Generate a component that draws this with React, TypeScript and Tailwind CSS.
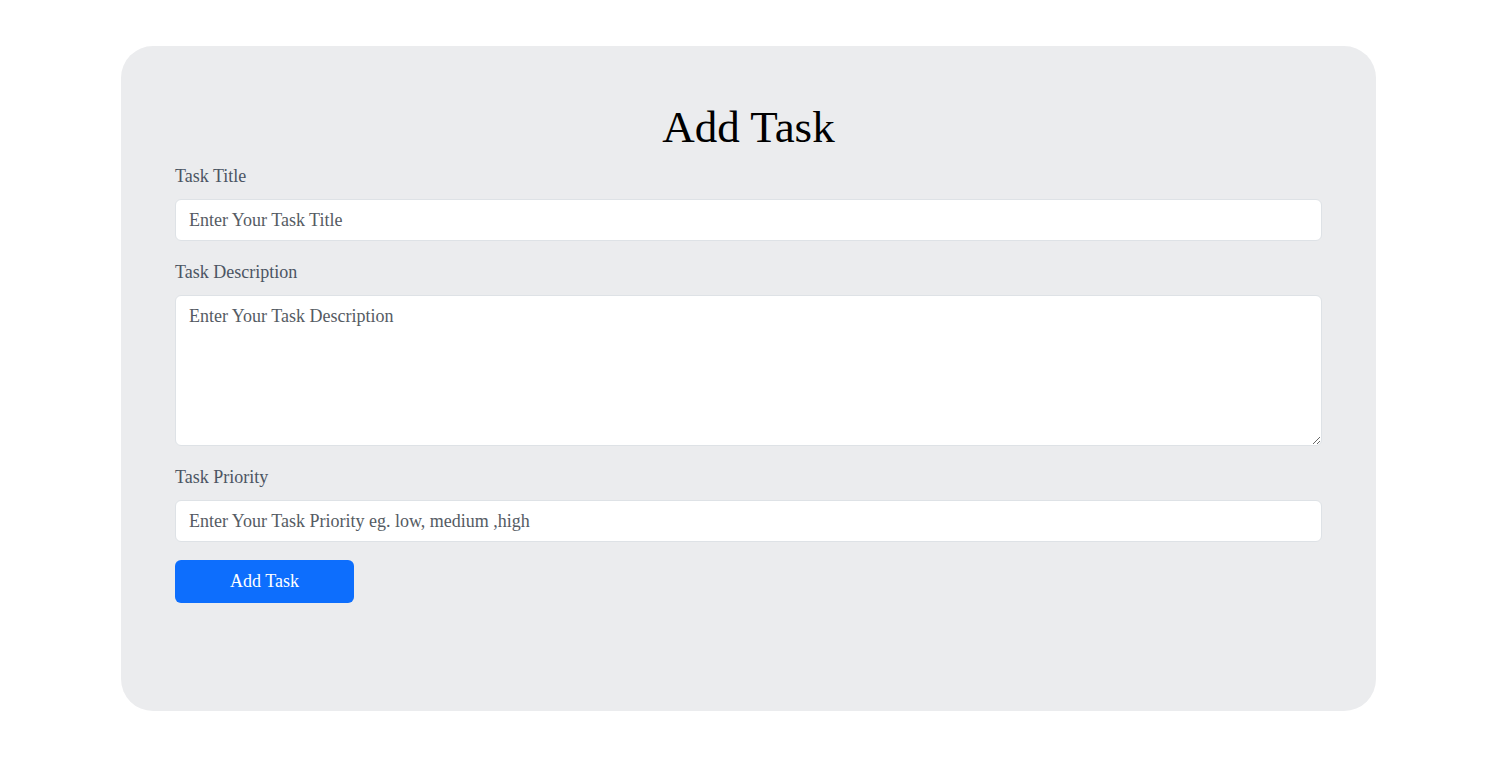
const Field = ({ label, placeholder }: { label: string; placeholder: string }) => {
  return (
    <div className="flex flex-col">
      <label className="text-[18px] leading-6 text-[#4b5563] mb-[11px]">{label}</label>
      <input
        className="h-[42px] w-full rounded-md border border-[#dee2e6] bg-white px-[13px] text-[18px] outline-none placeholder:text-[#555b63]"
        placeholder={placeholder}
      />
    </div>
  );
};

const App = () => {
  return (
    <div className="min-h-[760px] bg-white pt-[46px] font-['Liberation_Serif',serif]">
      <div className="ml-[121px] w-[1255px] h-[665px] rounded-[32px] bg-[#ebecee] px-[54px] pt-[57px]">
        <h1 className="text-center text-[45px] leading-[48px] text-black mb-[13px]">Add Task</h1>

        <div className="flex flex-col gap-[19px]">
          <Field label="Task Title" placeholder="Enter Your Task Title" />

          <div className="flex flex-col">
            <label className="text-[18px] leading-6 text-[#4b5563] mb-[11px]">Task Description</label>
            <textarea
              className="h-[151px] w-full rounded-md border border-[#dee2e6] bg-white px-[13px] pt-[7px] text-[18px] outline-none placeholder:text-[#555b63]"
              placeholder="Enter Your Task Description"
            />
          </div>

          <Field label="Task Priority" placeholder="Enter Your Task Priority eg. low, medium ,high" />
        </div>

        <button className="mt-[18px] h-[43px] w-[179px] rounded-md bg-[#0d6efd] text-[18px] text-white">
          Add Task
        </button>
      </div>
    </div>
  );
};

export default App;
